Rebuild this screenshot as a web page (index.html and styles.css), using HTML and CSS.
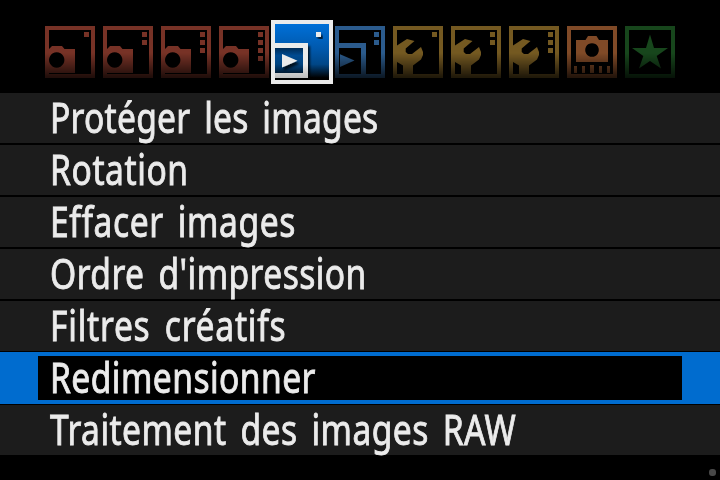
FILE: index.html
```
<!DOCTYPE html>
<html lang="fr">
<head>
<meta charset="utf-8">
<title>Menu</title>
<link rel="stylesheet" href="styles.css">
</head>
<body>
<svg class="defs" aria-hidden="true">
  <defs>
    <symbol id="frame" viewBox="0 0 50 52"><path fill-rule="evenodd" d="M0 0H50V52H0ZM4 4V48H46V4Z"/></symbol>
    <symbol id="camera" viewBox="0 0 50 52"><path fill-rule="evenodd" d="M4 23L7 20H17L19.500 23H30V47H4ZM11.700 26.300a7.700 7.700 0 1 0 .01 0Z"/></symbol>
    <symbol id="wrench" viewBox="0 0 50 52"><path d="M4 19.500L14 13L21.500 15L12.700 22.500V26L15 28H19L28 21L30 26V29L28 33.500L20 39.500V48H10V39.500L4 36Z"/></symbol>
    <symbol id="dots1" viewBox="0 0 50 52"><path d="M39 6h5v5h-5Z"/></symbol>
    <symbol id="dots2" viewBox="0 0 50 52"><path d="M39 6h5v5h-5ZM39 14h5v5h-5Z"/></symbol>
    <symbol id="dots3" viewBox="0 0 50 52"><path d="M39 6h5v5h-5ZM39 14h5v5h-5ZM39 22h5v5h-5Z"/></symbol>
    <symbol id="dots4" viewBox="0 0 50 52"><path d="M39 6h5v5h-5ZM39 14h5v5h-5ZM39 22h5v5h-5ZM39 30h5v5h-5Z"/></symbol>
  </defs>
</svg>
<nav class="tabs">
  <svg class="tab red" viewBox="0 0 50 52"><use href="#frame"/><use href="#camera"/><use href="#dots1"/></svg>
  <svg class="tab red" viewBox="0 0 50 52"><use href="#frame"/><use href="#camera"/><use href="#dots2"/></svg>
  <svg class="tab red" viewBox="0 0 50 52"><use href="#frame"/><use href="#camera"/><use href="#dots3"/></svg>
  <svg class="tab red" viewBox="0 0 50 52"><use href="#frame"/><use href="#camera"/><use href="#dots4"/></svg>
  <svg class="tab-active" viewBox="0 0 62 64">
    <defs>
      <linearGradient id="sky" x1="0" y1="0" x2="0" y2="1">
        <stop offset="0" stop-color="#0070d8"/><stop offset=".45" stop-color="#0058ac"/><stop offset=".72" stop-color="#004686"/><stop offset=".96" stop-color="#000"/>
      </linearGradient>
      <linearGradient id="well" x1="0" y1="0" x2="0" y2="1">
        <stop offset="0" stop-color="#002b55"/><stop offset=".3" stop-color="#004a90"/><stop offset=".65" stop-color="#004380"/><stop offset="1" stop-color="#001a33"/>
      </linearGradient>
      <linearGradient id="silver" gradientUnits="userSpaceOnUse" x1="0" y1="44" x2="0" y2="58">
        <stop offset="0" stop-color="#ebebeb"/><stop offset="1" stop-color="#bdbdbd"/>
      </linearGradient>
      <filter id="shade" x="-20%" y="-20%" width="150%" height="150%"><feDropShadow dx="2" dy="3" stdDeviation="1.2" flood-color="#000" flood-opacity=".75"/></filter>
      <clipPath id="inside"><path d="M4 4H58V60H4Z"/></clipPath>
    </defs>
    <path fill="#ebebeb" d="M0 0H62V64H0Z"/>
    <g clip-path="url(#inside)">
      <path fill="url(#sky)" d="M4 4H58V60H4Z"/>
      <path fill="#000" d="M4 57H42V60H4Z"/>
      <path fill="url(#silver)" filter="url(#shade)" d="M4 23H37V58H4V53H32V28H4Z"/>
      <path fill="url(#well)" d="M4 28H32V53H4Z"/>
      <path fill="#ebebeb" filter="url(#shade)" d="M11 34L26.500 40.700L11 47.500Z"/>
      <path fill="#ebebeb" filter="url(#shade)" d="M45 12h5v5h-5Z"/>
    </g>
  </svg>
  <svg class="tab blue" viewBox="0 0 50 52"><use href="#frame"/><path d="M4 17H31V48H26V22H4ZM5 28.300L19.500 34.500L5 41Z"/><use href="#dots2"/></svg>
  <svg class="tab gold" viewBox="0 0 50 52"><use href="#frame"/><use href="#wrench"/><use href="#dots1"/></svg>
  <svg class="tab gold" viewBox="0 0 50 52"><use href="#frame"/><use href="#wrench"/><use href="#dots2"/></svg>
  <svg class="tab gold" viewBox="0 0 50 52"><use href="#frame"/><use href="#wrench"/><use href="#dots3"/></svg>
  <svg class="tab orange" viewBox="0 0 50 52"><use href="#frame"/><path fill-rule="evenodd" d="M9 14H18.500L21 10H29.500L32 14H41V36H9ZM25 17.200a6.800 6.800 0 1 0 .01 0Z"/><path d="M7 40h3v7h-3ZM15 40h3v7h-3ZM23 39h4v8h-4ZM32 40h3v7h-3ZM40 40h3v7h-3Z"/></svg>
  <svg class="tab green" viewBox="0 0 50 52"><use href="#frame"/><path d="M25 8.500L29 22H43L31.700 30L36 42.500L25 35L14 42.500L18.300 30L7 22H21Z"/></svg>
</nav>
<main class="menu">
  <div class="row"><span class="label snug">Protéger les images</span></div>
  <div class="row"><span class="label wide">Rotation</span></div>
  <div class="row"><span class="label wide">Effacer images</span></div>
  <div class="row"><span class="label">Ordre d'impression</span></div>
  <div class="row"><span class="label widest">Filtres créatifs</span></div>
  <div class="row selected"><div class="field"><span class="label">Redimensionner</span></div></div>
  <div class="row"><span class="label">Traitement des images RAW</span></div>
</main>
<footer class="status"><i class="lamp"></i></footer>
</body>
</html>
```
FILE: styles.css
```
* { box-sizing: border-box; }
body {
  margin: 0;
  width: 720px;
  height: 480px;
  overflow: hidden;
  display: flex;
  flex-direction: column;
  background: #000;
  color: #ebebeb;
  font-family: "Noto Sans", sans-serif;
}
.defs { display: none; }
.tabs {
  height: 93px;
  padding: 20px 0 0 45px;
  display: flex;
  align-items: flex-start;
  gap: 8px;
}
.tab {
  flex: none;
  width: 50px;
  height: 52px;
  margin-top: 6px;
  fill: currentColor;
  -webkit-mask-image: linear-gradient(#000 52%, rgba(0, 0, 0, .28) 98%);
  mask-image: linear-gradient(#000 52%, rgba(0, 0, 0, .28) 98%);
}
.tab-active { flex: none; width: 62px; height: 64px; margin: 0 -6px; }
.red { color: #773226; }
.blue { color: #2b5b8d; }
.gold { color: #745921; }
.orange { color: #804a27; }
.green { color: #17461c; }
.menu { display: flex; flex-direction: column; gap: 2px; }
.row {
  height: 50px;
  padding-left: 50px;
  background: #1c1c1c;
  line-height: 48px;
}
.selected {
  height: 52px;
  margin: -1px 0;
  padding: 4px 38px;
  background: #006ccf;
}
.field {
  height: 44px;
  padding-left: 12px;
  background: #000;
  line-height: 42px;
}
.label {
  display: block;
  width: max-content;
  font-size: 42px;
  white-space: nowrap;
  font-variant-ligatures: none;
  letter-spacing: .55px;
  word-spacing: 6px;
  transform-origin: 0 0;
  transform: scaleX(.8);
  -webkit-text-stroke: .9px #ebebeb;
}
.snug { letter-spacing: .3px; }
.wide { letter-spacing: .72px; }
.widest { letter-spacing: .95px; }
.status {
  flex: 1;
  display: flex;
  justify-content: flex-end;
  padding: 14px 4px 0 0;
}
.lamp { width: 7px; height: 7px; border-radius: 3px; background: #484848; }
```
